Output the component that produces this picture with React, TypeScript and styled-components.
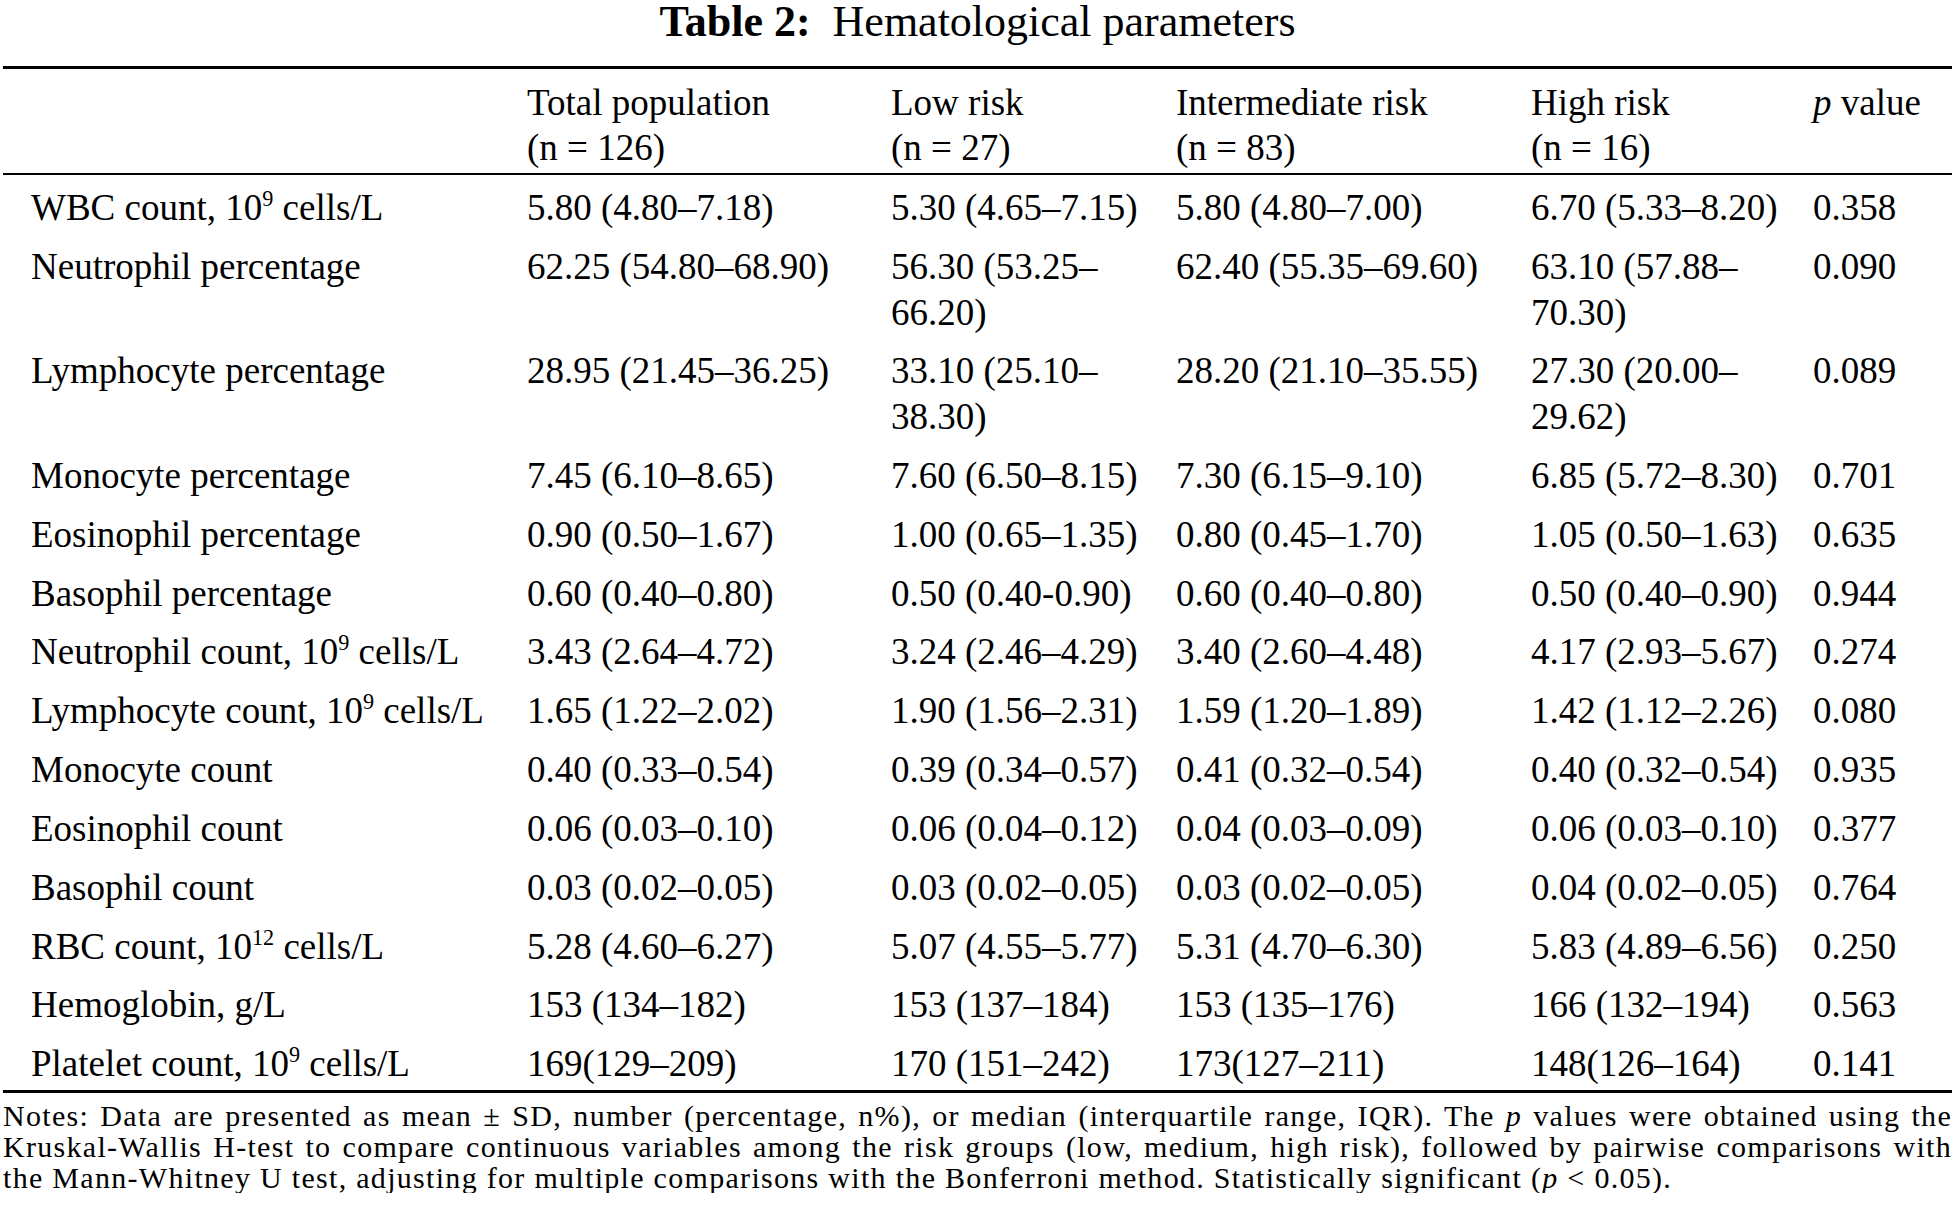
import * as React from 'react'
import styled, { createGlobalStyle } from 'styled-components'

const GlobalStyle = createGlobalStyle`
  html, body {
    margin: 0;
    padding: 0;
    background: #ffffff;
  }
  body {
    color: #000000;
    font-family: "Liberation Serif", "Times New Roman", serif;
  }
`

type Row = {
  label: React.ReactNode
  values: [string, string, string, string]
  p: string
}

const Sup = styled('sup')({
  fontSize: '0.6em',
  lineHeight: 0,
  verticalAlign: '0.62em',
})

const Em = styled('i')({
  fontStyle: 'italic',
})

const unit = (name: string, exp: string) => (
  <>
    {name}, 10<Sup>{exp}</Sup> cells/L
  </>
)

const rows: Row[] = [
  { label: unit('WBC count', '9'), values: ['5.80 (4.80–7.18)', '5.30 (4.65–7.15)', '5.80 (4.80–7.00)', '6.70 (5.33–8.20)'], p: '0.358' },
  { label: 'Neutrophil percentage', values: ['62.25 (54.80–68.90)', '56.30 (53.25–66.20)', '62.40 (55.35–69.60)', '63.10 (57.88–70.30)'], p: '0.090' },
  { label: 'Lymphocyte percentage', values: ['28.95 (21.45–36.25)', '33.10 (25.10–38.30)', '28.20 (21.10–35.55)', '27.30 (20.00–29.62)'], p: '0.089' },
  { label: 'Monocyte percentage', values: ['7.45 (6.10–8.65)', '7.60 (6.50–8.15)', '7.30 (6.15–9.10)', '6.85 (5.72–8.30)'], p: '0.701' },
  { label: 'Eosinophil percentage', values: ['0.90 (0.50–1.67)', '1.00 (0.65–1.35)', '0.80 (0.45–1.70)', '1.05 (0.50–1.63)'], p: '0.635' },
  { label: 'Basophil percentage', values: ['0.60 (0.40–0.80)', '0.50 (0.40-0.90)', '0.60 (0.40–0.80)', '0.50 (0.40–0.90)'], p: '0.944' },
  { label: unit('Neutrophil count', '9'), values: ['3.43 (2.64–4.72)', '3.24 (2.46–4.29)', '3.40 (2.60–4.48)', '4.17 (2.93–5.67)'], p: '0.274' },
  { label: unit('Lymphocyte count', '9'), values: ['1.65 (1.22–2.02)', '1.90 (1.56–2.31)', '1.59 (1.20–1.89)', '1.42 (1.12–2.26)'], p: '0.080' },
  { label: 'Monocyte count', values: ['0.40 (0.33–0.54)', '0.39 (0.34–0.57)', '0.41 (0.32–0.54)', '0.40 (0.32–0.54)'], p: '0.935' },
  { label: 'Eosinophil count', values: ['0.06 (0.03–0.10)', '0.06 (0.04–0.12)', '0.04 (0.03–0.09)', '0.06 (0.03–0.10)'], p: '0.377' },
  { label: 'Basophil count', values: ['0.03 (0.02–0.05)', '0.03 (0.02–0.05)', '0.03 (0.02–0.05)', '0.04 (0.02–0.05)'], p: '0.764' },
  { label: unit('RBC count', '12'), values: ['5.28 (4.60–6.27)', '5.07 (4.55–5.77)', '5.31 (4.70–6.30)', '5.83 (4.89–6.56)'], p: '0.250' },
  { label: 'Hemoglobin, g/L', values: ['153 (134–182)', '153 (137–184)', '153 (135–176)', '166 (132–194)'], p: '0.563' },
  { label: unit('Platelet count', '9'), values: ['169(129–209)', '170 (151–242)', '173(127–211)', '148(126–164)'], p: '0.141' },
]

// column widths in px, first one includes the left indent
const colWidths = [524, 364, 285, 355, 282, 139]

export default function App() {
  return (
    <Page>
      <GlobalStyle />
      <Title>
        <b>Table 2:</b>{'\u00a0 '}Hematological parameters
      </Title>
      <Table>
        <colgroup>
          {colWidths.map((w, i) => (
            <Col key={i} $w={w} />
          ))}
        </colgroup>
        <thead>
          <tr>
            <Th $first />
            <Th>
              Total population
              <br />
              (n = 126)
            </Th>
            <Th>
              Low risk
              <br />
              (n = 27)
            </Th>
            <Th>
              Intermediate risk
              <br />
              (n = 83)
            </Th>
            <Th>
              High risk
              <br />
              (n = 16)
            </Th>
            <Th>
              <Em>p</Em> value
            </Th>
          </tr>
        </thead>
        <tbody>
          {rows.map((row, i) => (
            <tr key={i}>
              <Td $first>{row.label}</Td>
              {row.values.map((v, j) => (
                <Td key={j}>{v}</Td>
              ))}
              <Td>{row.p}</Td>
            </tr>
          ))}
        </tbody>
      </Table>
      <Notes>
        Notes: Data are presented as mean ± SD, number (percentage, n%), or median (interquartile
        range, IQR). The <Em>p</Em> values were obtained using the Kruskal-Wallis H-test to compare
        continuous variables among the risk groups (low, medium, high risk), followed by pairwise
        comparisons with the Mann-Whitney U test, adjusting for multiple comparisons with the
        Bonferroni method. Statistically significant (<Em>p</Em> &lt; 0.05).
      </Notes>
    </Page>
  )
}

const Page = styled('div')({
  padding: '0 5px 0 3px',
  width: 1949,
})

const Title = styled('h1')({
  margin: '0 0 23px',
  fontSize: 44,
  lineHeight: '43px',
  fontWeight: 400,
  textAlign: 'center',
  whiteSpace: 'pre',
})

const Table = styled('table')({
  width: 1949,
  tableLayout: 'fixed',
  borderCollapse: 'collapse',
  borderTop: '3px solid #000',
  borderBottom: '3px solid #000',
  fontSize: 37,
  lineHeight: '45.5px',
})

const Col = styled('col')<{ $w: number }>((props) => ({
  width: props.$w,
}))

const Th = styled('th')<{ $first?: boolean }>((props) => ({
  padding: props.$first ? '10.5px 0 2.5px 28px' : '10.5px 0 2.5px',
  borderBottom: '2px solid #000',
  fontWeight: 400,
  textAlign: 'left',
  verticalAlign: 'top',
}))

const Td = styled('td')<{ $first?: boolean }>((props) => ({
  padding: props.$first ? '10.3px 0 3.05px 28px' : '10.3px 0 3.05px',
  textAlign: 'left',
  verticalAlign: 'top',
  whiteSpace: props.$first ? 'nowrap' : 'normal',
}))

const Notes = styled('p')({
  margin: '7px 0 0',
  fontSize: 30,
  letterSpacing: '1.3px',
  lineHeight: '31.2px',
  textAlign: 'justify',
})
